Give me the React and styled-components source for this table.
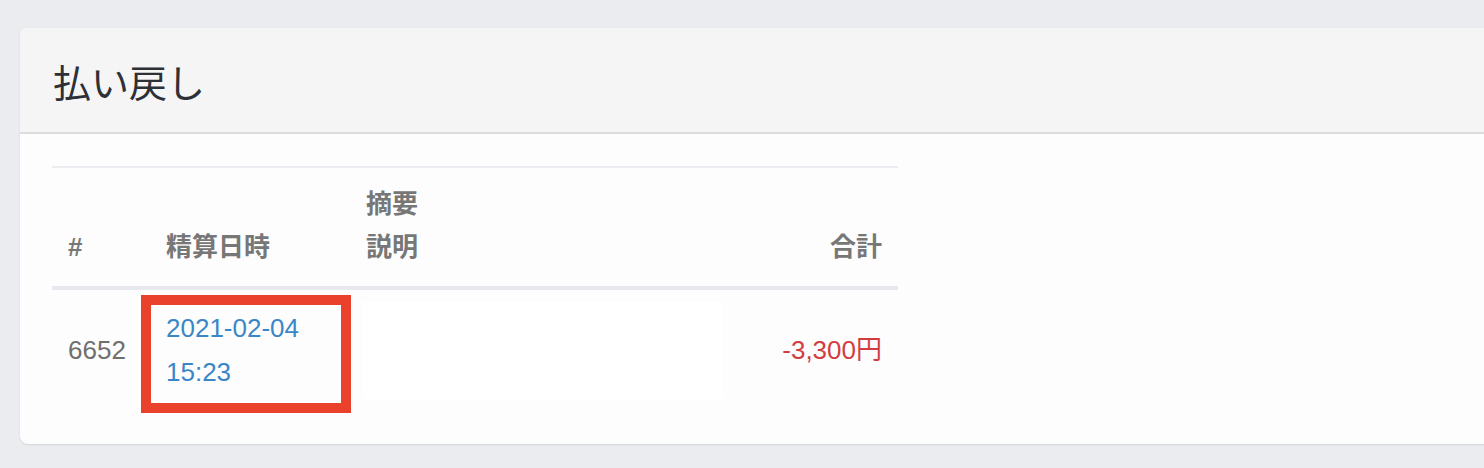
import styled, { createGlobalStyle } from "styled-components";

const GlobalStyle = createGlobalStyle`
    html, body {
        margin: 0;
        padding: 0;
        background: #ebecf0;
        overflow: hidden;
    }
    body {
        font-family: "Liberation Sans", "Noto Sans CJK JP", sans-serif;
    }
`;

const refunds = [
    { id: 6652, date: "2021-02-04", time: "15:23", total: "-3,300円" },
];

export default function App(){
    return(
        <>
            <GlobalStyle />
            <Page>
                <Card>
                    <CardHeader>
                        <Title>払い戻し</Title>
                    </CardHeader>
                    <CardBody>
                        <Table>
                            <colgroup>
                                <col style={{ width: "98px" }} />
                                <col style={{ width: "200px" }} />
                                <col />
                                <col style={{ width: "160px" }} />
                            </colgroup>
                            <thead>
                                <tr>
                                    <Th>#</Th>
                                    <Th>精算日時</Th>
                                    <Th>摘要<br />説明</Th>
                                    <Th $right>合計</Th>
                                </tr>
                            </thead>
                            <tbody>
                                {refunds.map(r => (
                                    <tr key={r.id}>
                                        <Td>{r.id}</Td>
                                        <DateCell>
                                            <Highlight />
                                            <DateLink href="#">{r.date}<br />{r.time}</DateLink>
                                        </DateCell>
                                        <Td $flush><Redacted /></Td>
                                        <Td $right $negative>{r.total}</Td>
                                    </tr>
                                ))}
                            </tbody>
                        </Table>
                    </CardBody>
                </Card>
            </Page>
        </>
    );
};

const Page = styled.div`
    height: 468px;
    box-sizing: border-box;
    padding: 28px 0 0 20px;
`;

const Card = styled.div`
    width: calc(100% + 20px);
    background: #fdfdfd;
    border-radius: 8px 0 0 8px;
    box-shadow: 0 1px 2px rgba(0, 0, 0, 0.1);
    overflow: hidden;
`;

const CardHeader = styled.div`
    height: 104px;
    display: flex;
    align-items: center;
    padding-left: 33px;
    background: #f5f5f5;
    border-bottom: 2px solid #dcdcdc;
`;

const Title = styled.h1`
    margin: 0;
    font-size: 38px;
    font-weight: normal;
    color: #2e3038;
`;

const CardBody = styled.div`
    padding: 32px 32px 34px;
`;

const Table = styled.table`
    width: 846px;
    border-collapse: collapse;
    table-layout: fixed;
    border-top: 2px solid #ebecf0;
`;

const Th = styled.th`
    padding: 15px 16px 17px;
    font-size: 26px;
    line-height: 43px;
    font-weight: bold;
    color: #777777;
    text-align: ${p => p.$right ? "right" : "left"};
    vertical-align: bottom;
    border-bottom: 4px solid #e8e9ee;
`;

const Td = styled.td`
    padding: ${p => p.$flush ? "0 16px 0 13px" : "16px"};
    font-size: 26px;
    line-height: 44px;
    color: ${p => p.$negative ? "#d13d41" : "#6f6f6f"};
    text-align: ${p => p.$right ? "right" : "left"};
    vertical-align: middle;
`;

const DateCell = styled(Td)`
    position: relative;
`;

const DateLink = styled.a`
    color: #3a87c8;
    text-decoration: none;
`;

const Highlight = styled.span`
    position: absolute;
    top: 5px;
    left: -9px;
    width: 210px;
    height: 118px;
    box-sizing: border-box;
    border: 10px solid #e9412b;
    pointer-events: none;
`;

const Redacted = styled.div`
    width: 360px;
    height: 97px;
    background: #ffffff;
`;
